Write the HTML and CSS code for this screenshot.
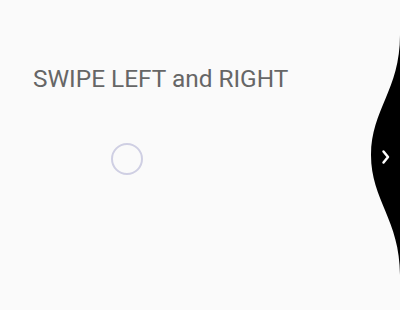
FILE: index.html
```html
<!DOCTYPE html>
<html lang="en">
<head>
    <meta charset="UTF-8">
    <meta name="viewport" content="width=device-width, initial-scale=1.0">
    <title>Swipe</title>
    <link rel="stylesheet" href="styles.css">
</head>
<body>
    <div class="screen">
        <h1 class="title">SWIPE LEFT and RIGHT</h1>
        <div class="spinner"></div>

        <!-- Liquid swipe handle -->
        <svg class="wave" width="30" height="310" viewBox="370 0 30 310">
            <path d="M400,35 C400,90 371,110 371,155 C371,200 400,220 400,275 Z" fill="#000"/>
            <path d="M383.5,151.5 L388,157 L383.5,162.5" fill="none" stroke="#fff" stroke-width="2.5" stroke-linecap="round" stroke-linejoin="round"/>
        </svg>
    </div>
</body>
</html>
```

FILE: styles.css
```css
* {
    margin: 0;
    padding: 0;
    box-sizing: border-box;
}

body {
    font-family: Roboto, 'Noto Sans', sans-serif;
    background: #fafafa;
    color: #666;
}

.screen {
    position: relative;
    width: 400px;
    height: 310px;
    overflow: hidden;
    padding: 65px 0 0 33px;
}

.title {
    font-size: 24.4px;
    font-weight: 400;
    line-height: 28px;
    color: #666;
}

.spinner {
    width: 32px;
    height: 32px;
    margin: 50px 0 0 78px;
    border: 2px solid #cfcfe3;
    border-radius: 50%;
}

.wave {
    position: absolute;
    top: 0;
    right: 0;
}
```
